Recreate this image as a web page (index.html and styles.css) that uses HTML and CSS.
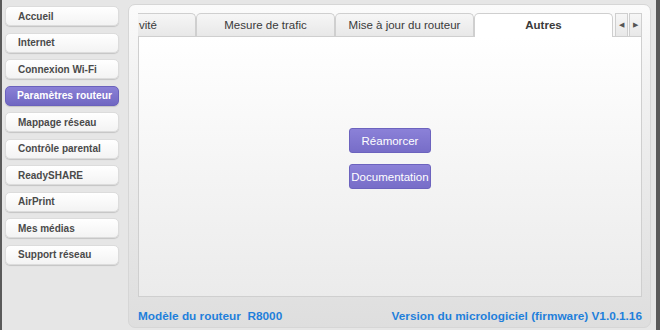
FILE: index.html
```html
<!DOCTYPE html>
<html lang="fr">
<head>
    <meta charset="UTF-8">
    <title>Paramètres routeur</title>
    <link rel="stylesheet" href="styles.css">
</head>
<body>
    <div class="frame">
        <div class="side-menu">
            <button class="menu-btn">Accueil</button>
            <button class="menu-btn">Internet</button>
            <button class="menu-btn">Connexion Wi-Fi</button>
            <button class="menu-btn active">Paramètres routeur</button>
            <button class="menu-btn">Mappage réseau</button>
            <button class="menu-btn">Contrôle parental</button>
            <button class="menu-btn">ReadySHARE</button>
            <button class="menu-btn">AirPrint</button>
            <button class="menu-btn">Mes médias</button>
            <button class="menu-btn">Support réseau</button>
        </div>
        <div class="main-panel">
            <div class="tab-bar">
                <div class="tab partial">vité</div>
                <div class="tab">Mesure de trafic</div>
                <div class="tab">Mise à jour du routeur</div>
                <div class="tab selected">Autres</div>
                <div class="tab-arrows">
                    <span class="arrow">&#9664;</span>
                    <span class="arrow">&#9654;</span>
                </div>
            </div>
            <div class="tab-content">
                <button class="action-btn">Réamorcer</button>
                <button class="action-btn">Documentation</button>
            </div>
            <div class="panel-footer">
                <span>Modèle du routeur&nbsp; R8000</span>
                <span>Version du micrologiciel (firmware) V1.0.1.16</span>
            </div>
        </div>
    </div>
</body>
</html>
```

FILE: styles.css
```css
:root {
    --purple: #7f74cc;
    --blue: #1f7fdb;
    --border: #cfcfcf;
    --text: #3a3a3a;
}

body {
    margin: 0;
    padding: 0;
    background: #e5e5e5;
    font-family: "Liberation Sans", Arial, sans-serif;
}

.frame {
    display: flex;
    height: 330px;
    border-left: 2px solid #5a5a5a;
    border-right: 4px solid #5a5a5a;
    box-sizing: border-box;
    background: #e6e6e6;
}

.side-menu {
    width: 126px;
    padding: 6px 0 0 3px;
    box-sizing: border-box;
    display: flex;
    flex-direction: column;
    gap: 6.5px;
}

.menu-btn {
    width: 114px;
    height: 20px;
    padding: 0 0 0 12px;
    text-align: left;
    font-family: inherit;
    font-size: 10px;
    font-weight: 700;
    color: #4a4a4a;
    background: linear-gradient(#ffffff, #f3f3f3);
    border: 1px solid #dcdcdc;
    border-radius: 5px;
    box-shadow: 0 1px 1px rgba(0, 0, 0, 0.15);
}

.menu-btn.active {
    background: linear-gradient(#8a80d6, #7067c2);
    border-color: #6a61bc;
    color: #fff;
    padding-left: 11px;
    font-size: 10.3px;
}

.main-panel {
    width: 523px;
    margin-top: 4px;
    margin-bottom: 2px;
    padding: 8px 8px 0 9px;
    box-sizing: border-box;
    background: linear-gradient(#fbfbfb, #f3f3f3 20%, #dedede);
    border: 1px solid #d6d6d6;
    border-radius: 7px;
    display: flex;
    flex-direction: column;
}

.tab-bar {
    display: flex;
    height: 23px;
}

.tab {
    width: 139px;
    flex: none;
    box-sizing: border-box;
    text-align: center;
    font-size: 11.5px;
    color: var(--text);
    line-height: 22px;
    background: linear-gradient(#f6f6f6, #e8e8e8);
    border: 1px solid var(--border);
    border-bottom: none;
    border-radius: 5px 5px 0 0;
}

.tab.partial {
    width: 58px;
    text-align: left;
    padding-left: 1px;
    border-left: none;
    border-radius: 0 5px 0 0;
}

.tab.selected {
    background: #fff;
    font-weight: 700;
    height: 24px;
    position: relative;
    z-index: 1;
}

.tab-arrows {
    flex: 1;
    display: flex;
    gap: 1px;
    margin-left: 2px;
}

.arrow {
    flex: 1;
    font-size: 7px;
    line-height: 22px;
    text-align: center;
    color: #555;
    background: linear-gradient(#f6f6f6, #e8e8e8);
    border: 1px solid var(--border);
    border-bottom: none;
}

.tab-content {
    height: 261px;
    box-sizing: border-box;
    background: linear-gradient(#ffffff, #f7f7f7 40%, #ebebeb);
    border: 1px solid var(--border);
    display: flex;
    flex-direction: column;
    align-items: flex-start;
    padding: 91px 0 0 210px;
    gap: 11px;
}

.action-btn {
    width: 82px;
    height: 25px;
    font-family: inherit;
    font-size: 11.5px;
    color: #fff;
    background: linear-gradient(#8b81d8, #776dc8);
    border: 1px solid #6c63be;
    border-radius: 3px;
    padding: 0;
}

.panel-footer {
    display: flex;
    justify-content: space-between;
    padding: 12px 0 0 0;
    font-size: 11.8px;
    font-weight: 700;
    color: var(--blue);
}
```
